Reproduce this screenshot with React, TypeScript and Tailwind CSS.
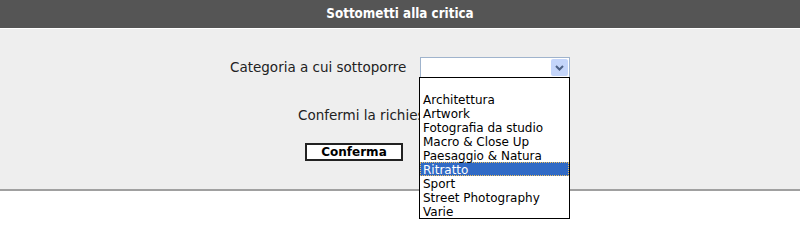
import { useState } from "react"

const categories = [
  "",
  "Architettura",
  "Artwork",
  "Fotografia da studio",
  "Macro & Close Up",
  "Paesaggio & Natura",
  "Ritratto",
  "Sport",
  "Street Photography",
  "Varie",
]

function ChevronDown() {
  return (
    <svg width="9" height="6" viewBox="0 0 9 6" className="block">
      <path d="M1 1 L4.5 4.5 L8 1" stroke="#4d6185" strokeWidth="2" fill="none" />
    </svg>
  )
}

export default function App() {
  const [selected] = useState("Ritratto")

  return (
    <div className="w-full min-h-[242px] bg-white font-['DejaVu_Sans',sans-serif]">
      <div className="h-[29px] bg-[#555555] border-b border-white flex items-center justify-center">
        <span className="text-white font-bold text-[13.3px] font-['DejaVu_Sans_Condensed','DejaVu_Sans',sans-serif]">
          Sottometti alla critica
        </span>
      </div>

      <div className="h-[162px] bg-[#eeeeee] border-b-2 border-[#a0a0a0] pt-[28px]">
        <div className="mx-auto w-[340px]">
          <div className="flex items-center justify-between">
            <span className="text-[13.5px] text-[#222]">Categoria a cui sottoporre</span>
            <div className="relative">
              <div className="w-[150px] h-[21px] bg-white border border-[#9fb3cc] flex items-center justify-end pr-[1px]">
                <div className="w-[17px] h-[17px] bg-[#c4d5fa] rounded-[2px] flex items-center justify-center">
                  <ChevronDown />
                </div>
              </div>
              <ul className="absolute left-[-1px] top-[20px] w-[151px] bg-white border border-black text-[12px] text-black z-10">
                {categories.map((c) => (
                  <li
                    key={c || "empty"}
                    className={
                      c === selected
                        ? "h-[14px] leading-[14px] px-[2px] bg-[#316ac5] text-white border border-dotted border-[#f0c060]"
                        : "h-[14px] leading-[16px] px-[3px]"
                    }
                  >
                    {c}
                  </li>
                ))}
              </ul>
            </div>
          </div>

          <div className="mt-[27px] ml-[68px] text-[13.5px] leading-[20px] text-[#222]">Confermi la richiesta</div>

          <div className="mt-[18px] ml-[75px]">
            <button className="w-[98px] h-[18px] bg-white border-2 border-[#222] text-[12px] font-bold text-black leading-none flex items-center justify-center">
              Conferma
            </button>
          </div>
        </div>
      </div>
    </div>
  )
}
